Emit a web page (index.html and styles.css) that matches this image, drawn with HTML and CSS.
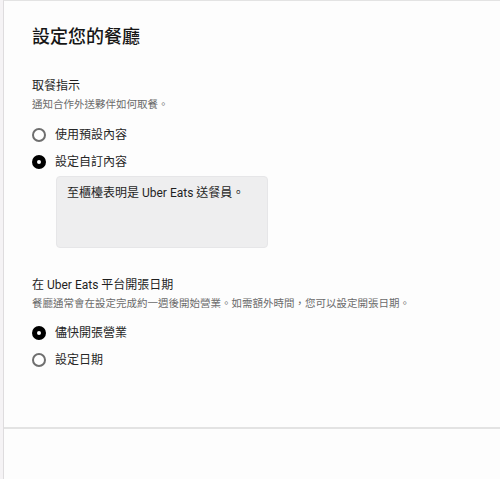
FILE: index.html
```html
<!DOCTYPE html>
<html lang="zh-Hant">
<head>
<meta charset="utf-8">
<link rel="stylesheet" href="styles.css">
</head>
<body>
<div class="panel">
  <main class="content">
    <h1 class="title">設定您的餐廳</h1>

    <section class="section first">
      <div class="label">取餐指示</div>
      <div class="desc">通知合作外送夥伴如何取餐。</div>
      <div class="options">
        <div class="option"><span class="radio"></span><span>使用預設內容</span></div>
        <div class="option"><span class="radio checked"></span><span>設定自訂內容</span></div>
      </div>
      <div class="textbox">至櫃檯表明是 Uber Eats 送餐員。</div>
    </section>

    <section class="section second">
      <div class="label">在 Uber Eats 平台開張日期</div>
      <div class="desc">餐廳通常會在設定完成約一週後開始營業。如需額外時間，您可以設定開張日期。</div>
      <div class="options">
        <div class="option"><span class="radio checked"></span><span>儘快開張營業</span></div>
        <div class="option"><span class="radio"></span><span>設定日期</span></div>
      </div>
    </section>
  </main>
  <footer class="footer"></footer>
</div>
</body>
</html>
```

FILE: styles.css
```css
html, body {
  margin: 0;
  padding: 0;
  height: 100%;
}
body {
  background: #f5f3f5;
  padding-left: 3px;
  box-sizing: border-box;
  font-family: Roboto, "Noto Sans CJK TC", sans-serif;
  color: #1f1f1f;
}
.panel {
  background: #fdfdfd;
  border-left: 1px solid #dedcde;
  border-top: 1px solid #e3e3e3;
  height: 100%;
  box-sizing: border-box;
  display: flex;
  flex-direction: column;
}
.content {
  height: 426px;
  box-sizing: border-box;
  padding: 24px 28px 0 28px;
}
.footer {
  flex: 1;
  border-top: 2px solid #e3e3e3;
}
.title {
  margin: 0;
  font-size: 18px;
  line-height: 24px;
  font-weight: 500;
  color: #161616;
}
.section.first {
  margin-top: 29px;
}
.section.second {
  margin-top: 29px;
}
.label {
  font-size: 12px;
  line-height: 16px;
  color: #1f1f1f;
}
.desc {
  font-size: 10.5px;
  line-height: 14px;
  color: #6b6b6b;
  margin-top: 4px;
  white-space: nowrap;
}
.options {
  margin-top: 15px;
  display: flex;
  flex-direction: column;
  gap: 11px;
}
.second .options {
  margin-top: 14px;
}
.option {
  display: flex;
  align-items: center;
  gap: 9px;
  font-size: 12px;
  line-height: 16px;
  color: #262626;
}
.radio {
  width: 14px;
  height: 14px;
  box-sizing: border-box;
  border-radius: 50%;
  border: 2px solid #6f6f6f;
  background: #fff;
  flex: none;
}
.radio.checked {
  border: 5px solid #000;
}
.textbox {
  margin: 6px 0 0 24px;
  width: 212px;
  height: 72px;
  box-sizing: border-box;
  background: #eeeeef;
  border: 1px solid #e6e6e8;
  border-radius: 4px;
  padding: 8px 10px;
  font-size: 12px;
  line-height: 16px;
  color: #1f1f1f;
}
```
